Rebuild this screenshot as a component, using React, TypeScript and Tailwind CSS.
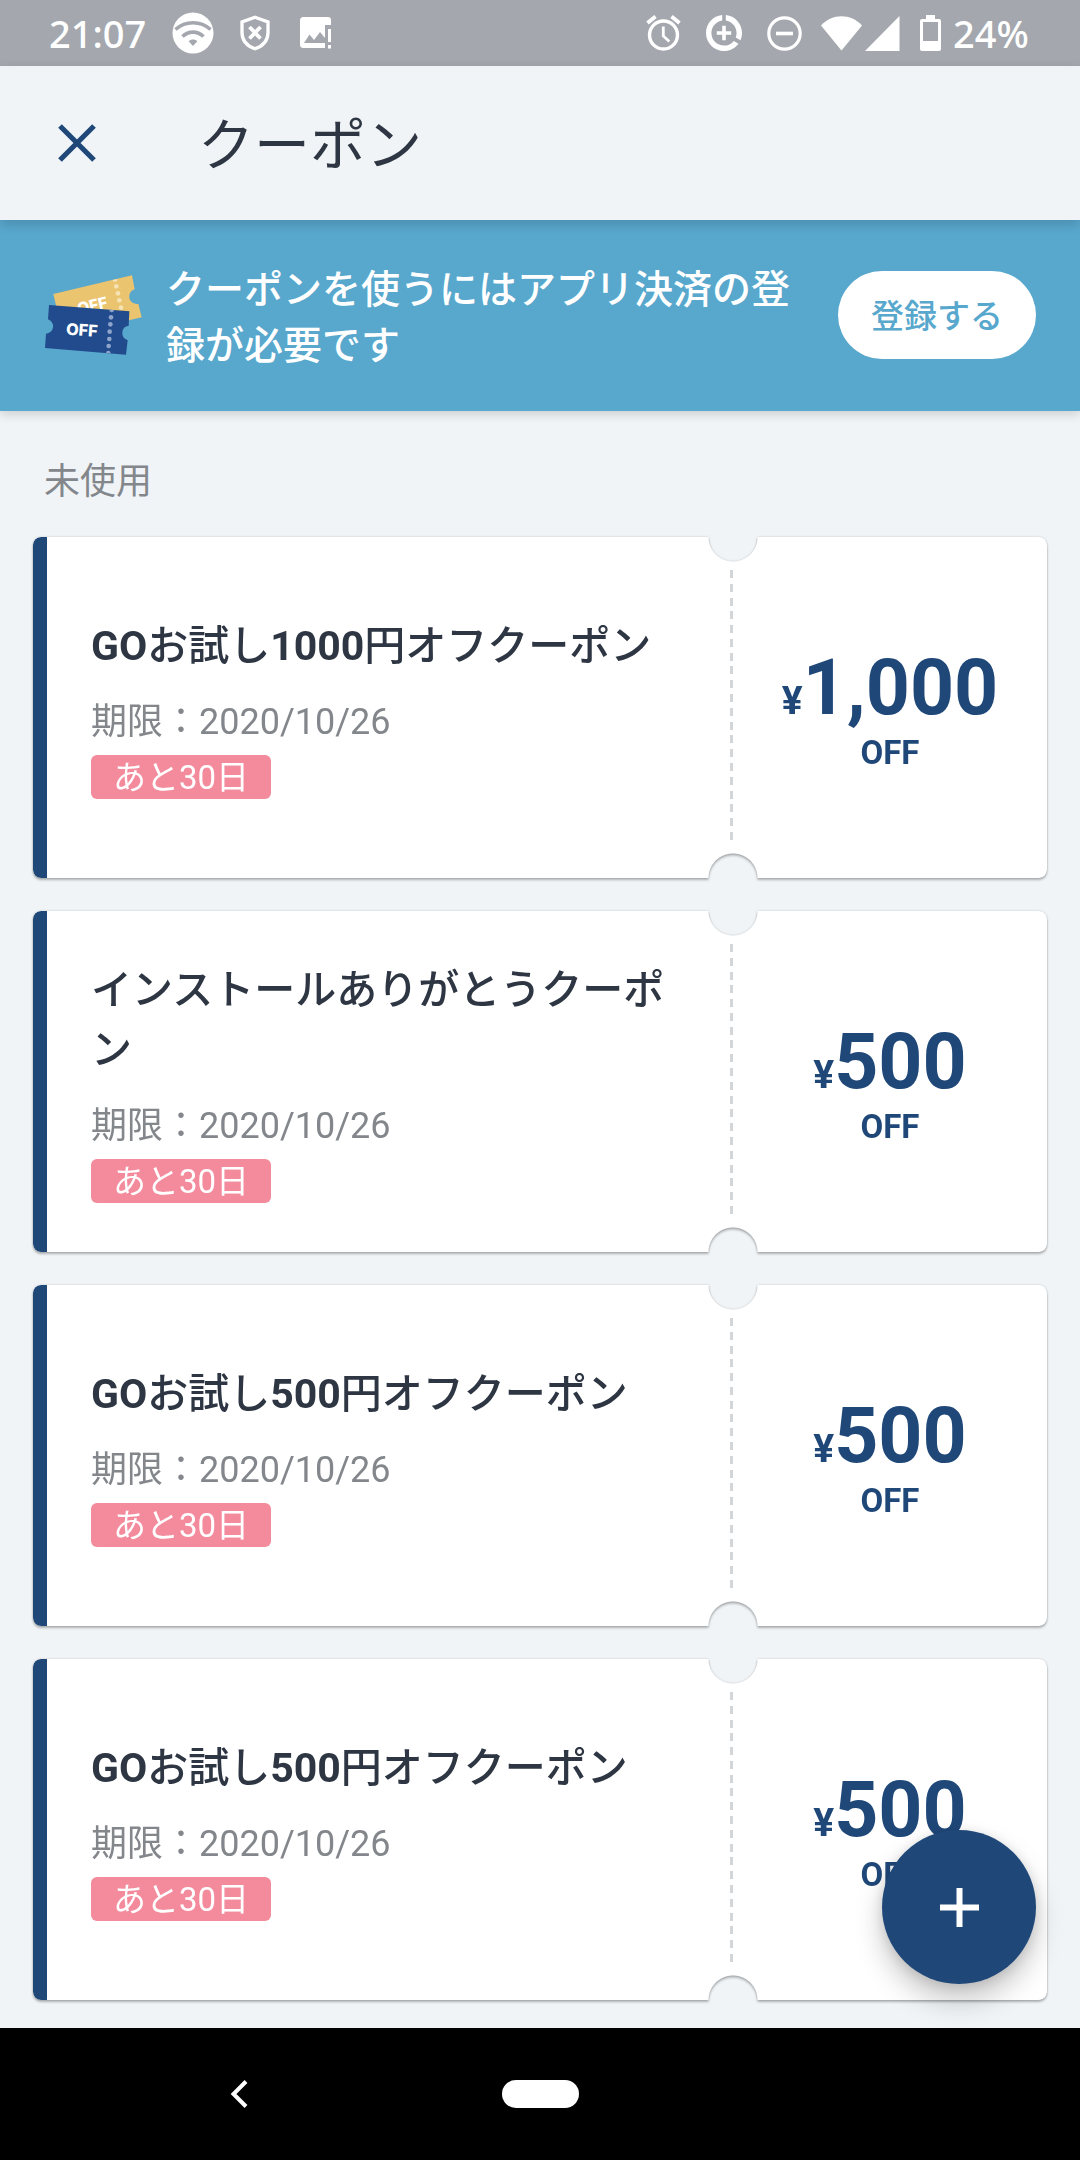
import React from "react";

type Coupon = { id: number; title: string; expiry: string; remaining: string; amount: string };

const coupons: Coupon[] = [
  { id: 1, title: "GOお試し1000円オフクーポン", expiry: "2020/10/26", remaining: "あと30日", amount: "1,000" },
  { id: 2, title: "インストールありがとうクーポン", expiry: "2020/10/26", remaining: "あと30日", amount: "500" },
  { id: 3, title: "GOお試し500円オフクーポン", expiry: "2020/10/26", remaining: "あと30日", amount: "500" },
  { id: 4, title: "GOお試し500円オフクーポン", expiry: "2020/10/26", remaining: "あと30日", amount: "500" },
];

function StatusBar() {
  return (
    <div className="flex h-[66px] items-center justify-between bg-[#a4a8ae] pr-[50px] pl-[49px] font-['Noto_Sans','Noto_Sans_CJK_JP',sans-serif] text-[38px] leading-[44px] font-medium text-white">
      <div className="flex items-center">
        <span className="w-[96px]">21:07</span>
        <svg className="ml-[27px]" width="42" height="42" viewBox="0 0 42 42" aria-hidden="true">
          <circle cx="21" cy="21" r="20.5" fill="#fff" />
          <g fill="none" stroke="#a4a8ae" strokeWidth="3.6">
            <path d="M3.5 17.5C13.5 8.500 28.500 8.500 38.500 17.500" />
            <path d="M10.500 24.500c6-5.800 15-5.800 21 0" />
          </g>
          <path d="M16.600 29.200c2.600-2.300 6.200-2.300 8.800 0L21 34z" fill="#a4a8ae" />
        </svg>
        <svg className="ml-[26px]" width="30" height="36" viewBox="0 0 30 36" fill="none" stroke="#fff" aria-hidden="true">
          <path d="M15 2.200 28 7v10.500c0 7.700-5 13.500-13 16.300C7 31 2 25.200 2 17.500V7z" strokeWidth="3.300" />
          <path d="m9.500 12 11 11.500M20.500 12l-11 11.500" strokeWidth="3.800" />
        </svg>
        <svg className="ml-[30px]" width="32" height="32" viewBox="0 0 32 32" aria-hidden="true">
          <path
            fill="#fff"
            fillRule="evenodd"
            d="M3.500 0H28a3 3 0 0 1 3 3v5h-6v23H3.500A3.500 3.500 0 0 1 0 27.500v-24A3.500 3.500 0 0 1 3.500 0zM4 26h21v-5l-5-6-6 8-4.500-5.500z"
          />
          <path d="M28 12h3v13h-3zM28 28h3v3.500h-3z" fill="#fff" />
        </svg>
      </div>
      <div className="flex items-center">
        <svg width="35" height="36" viewBox="0 0 35 36" fill="none" stroke="#fff" aria-hidden="true">
          <circle cx="17.500" cy="20" r="14" strokeWidth="3.400" />
          <path d="m1.500 8 8-6.500M33.500 8l-8-6.500" strokeWidth="3.800" />
          <path d="M17.300 11.500v9.500l6 5.500" strokeWidth="2.800" />
        </svg>
        <svg className="ml-[25px]" width="36" height="36" viewBox="2 2 20 20" fill="#fff" aria-hidden="true">
          <path d="M11 8v3H8v2h3v3h2v-3h3v-2h-3V8h-2zm2-5.950v3.030c3.390.490 6 3.390 6 6.920 0 .900-.180 1.750-.480 2.540l2.600 1.530c.560-1.240.880-2.620.880-4.070 0-5.180-3.950-9.450-9-9.950zM12 19c-3.870 0-7-3.130-7-7 0-3.530 2.610-6.430 6-6.920V2.050c-5.060.500-9 4.760-9 9.950 0 5.520 4.470 10 9.990 10 3.310 0 6.240-1.610 8.060-4.090l-2.600-1.530A6.950 6.950 0 0 1 12 19z" />
        </svg>
        <svg className="ml-[25px]" width="35" height="35" viewBox="0 0 35 35" fill="none" stroke="#fff" aria-hidden="true">
          <circle cx="17.500" cy="17.500" r="15.700" strokeWidth="3.200" />
          <path d="M9 17.500h17" strokeWidth="3.600" />
        </svg>
        <svg className="ml-[19px]" width="41" height="35" viewBox="0 0 41 35" fill="#fff" aria-hidden="true">
          <path d="M20.500 34.500 0 9.500C11.500-2.700 29.500-2.700 41 9.500z" />
        </svg>
        <svg className="ml-[3px]" width="35" height="35" viewBox="0 0 35 35" fill="#fff" aria-hidden="true">
          <path d="M34.500 0v35H0z" />
        </svg>
        <svg className="ml-5" width="21" height="36" viewBox="0 0 21 36" fill="#fff" aria-hidden="true">
          <path
            fillRule="evenodd"
            d="M6 0h9v4h4a2 2 0 0 1 2 2v28a2 2 0 0 1-2 2H2a2 2 0 0 1-2-2V6a2 2 0 0 1 2-2h4zM3 7v19h15V7z"
          />
        </svg>
        <span className="ml-3 w-[77px]">24%</span>
      </div>
    </div>
  );
}

function TicketsIcon() {
  return (
    <svg width="97" height="80" viewBox="135 165 291 240" className="shrink-0" aria-hidden="true">
      <path d="M160 222 396 166l8 42a22 22 0 0 0 11 43l10 41-60 14-190-20z" fill="#eac46f" />
      <g fill="#f6e3b4">
        <path d="m338 180 14-3a7 7 0 0 1-14 3z" />
        <circle cx="349" cy="199" r="7" />
        <circle cx="354" cy="220" r="7" />
        <circle cx="358" cy="241" r="7" />
        <circle cx="363" cy="263" r="7" />
      </g>
      <text x="236" y="283" transform="rotate(-13 236 283)" fill="#fff" className="font-['Inter',sans-serif] text-[47px] font-extrabold">
        OFF
      </text>
      <path d="m147 255 241 19-2 43a22 22 0 0 0-3 43l-5 44-243-20 3-43a22 22 0 0 0 6-43z" fill="#214b8c" />
      <g fill="#8ea4cb">
        <path d="m328 269 14 1a7 7 0 0 1-14-1z" />
        <circle cx="333" cy="292" r="7" />
        <circle cx="331" cy="313" r="7" />
        <circle cx="329" cy="335" r="7" />
        <circle cx="328" cy="357" r="7" />
        <circle cx="326" cy="378" r="7" />
        <path d="m318 399 14 1a7 7 0 0 0-14-1z" />
      </g>
      <text x="197" y="344" transform="rotate(4 197 344)" fill="#fff" className="font-['Inter',sans-serif] text-[49px] font-extrabold">
        OFF
      </text>
    </svg>
  );
}

function Perforation() {
  return (
    <div className="my-[33px] flex w-[3px] flex-col justify-between pb-[5px]" aria-hidden="true">
      {Array.from({ length: 20 }, (_, i) => (
        <span key={i} className="h-2 bg-[#d3d6d8]" />
      ))}
    </div>
  );
}

/* Latin letters and digits are set bolder than the Japanese around them. */
function CouponTitle({ text }: { text: string }) {
  return (
    <h2 className="text-[41px] leading-[60px] font-medium break-all text-[#2d3642]">
      {text.split(/([A-Z0-9]+)/).map((part, i) => (
        <span key={i} className={i % 2 === 1 ? "font-bold" : undefined}>
          {part}
        </span>
      ))}
    </h2>
  );
}

function CouponCard({ coupon }: { coupon: Coupon }) {
  return (
    <li className="[filter:drop-shadow(0_0_1px_rgba(0,0,0,0.16))_drop-shadow(0_2px_1px_rgba(0,0,0,0.26))]">
      <article className="flex min-h-[341px] overflow-hidden rounded-lg bg-white [mask-composite:intersect] [mask-image:radial-gradient(circle_at_calc(100%-314px)_0,transparent_24px,black_25px),radial-gradient(circle_at_calc(100%-314px)_100%,transparent_24px,black_25px)]">
        <div className="w-[14px] shrink-0 bg-[#1f4879]" />
        <div className="flex min-w-0 flex-1 flex-col items-start justify-center pr-11 pl-11">
          <CouponTitle text={coupon.title} />
          <p className="mt-5 text-[36px] leading-[52px] text-[#83878c]">期限：{coupon.expiry}</p>
          <span className="mt-[7px] rounded-md bg-[#f38b9c] px-[22px] pt-0.5 text-[33px] leading-[42px] text-white">
            {coupon.remaining}
          </span>
        </div>
        <Perforation />
        <div className="flex w-[314px] shrink-0 flex-col items-center justify-center font-bold text-[#1f4879]">
          <p className="text-[77px] leading-[90px]">
            <span className="text-[39px] leading-10">¥</span>
            {coupon.amount}
          </p>
          <p className="text-[33px] leading-10">OFF</p>
        </div>
      </article>
    </li>
  );
}

export default function App() {
  return (
    <div className="flex min-h-screen flex-col bg-[#f0f4f7] font-['Roboto','Noto_Sans_CJK_JP',sans-serif]" lang="ja">
      <StatusBar />
      <header className="relative z-20 flex h-[154px] items-center bg-[#f0f4f7] pl-[58px] shadow-[0_4px_11px_rgba(0,0,0,0.16)]">
        <button type="button" aria-label="閉じる" className="w-[140px]">
          <svg width="38" height="38" viewBox="0 0 38 38" stroke="#1f4879" strokeWidth="5.200" aria-hidden="true">
            <path d="m2 2 34 34M36 2 2 36" />
          </svg>
        </button>
        <h1 className="pb-1 font-['Noto_Sans_CJK_JP',sans-serif] text-[56px] leading-[80px] text-[#2d3642]">クーポン</h1>
      </header>
      <section className="relative z-10 flex min-h-[191px] items-center bg-[#58a7cd] pr-11 pb-0.5 pl-[45px] font-['Noto_Sans_CJK_JP',sans-serif] shadow-[0_3px_10px_rgba(0,0,0,0.16)]">
        <TicketsIcon />
        <p className="ml-6 flex-1 pb-0.5 text-[39px] leading-[56px] font-medium break-all text-white">
          クーポンを使うにはアプリ決済の登録が必要です
        </p>
        <button
          type="button"
          className="ml-[22px] h-[88px] w-[198px] shrink-0 rounded-full bg-white pb-0.5 text-[33px] leading-[48px] font-medium text-[#58a7cd]"
        >
          登録する
        </button>
      </section>
      <main className="relative flex-1 px-[33px] pt-[41px] pb-7">
        <h2 className="pl-[11px] font-['Noto_Sans_CJK_JP',sans-serif] text-[36px] leading-[52px] text-[#83878c]">未使用</h2>
        <ul className="mt-[33px] flex flex-col gap-[33px]">
          {coupons.map((coupon) => (
            <CouponCard key={coupon.id} coupon={coupon} />
          ))}
        </ul>
        <button
          type="button"
          aria-label="クーポンを追加"
          className="absolute right-11 bottom-11 flex size-[154px] items-center justify-center rounded-full bg-[#1f4879] shadow-[0_16px_28px_rgba(0,0,0,0.22),0_2px_12px_rgba(0,0,0,0.12)]"
        >
          <svg width="39" height="39" viewBox="0 0 39 39" stroke="#fff" strokeWidth="6" aria-hidden="true">
            <path d="M19.500 0v39M0 19.500h39" />
          </svg>
        </button>
      </main>
      <nav className="grid h-[132px] grid-cols-[1fr_77px_1fr] items-center bg-black">
        <button type="button" aria-label="戻る" className="mr-[233px] flex w-[60px] justify-center justify-self-end">
          <svg width="18" height="28" viewBox="0 0 18 28" fill="none" stroke="#fff" strokeWidth="4" aria-hidden="true">
            <path d="M16 1.500 3.500 14 16 26.500" />
          </svg>
        </button>
        <button type="button" aria-label="ホーム" className="h-7 rounded-full bg-white" />
      </nav>
    </div>
  );
}
